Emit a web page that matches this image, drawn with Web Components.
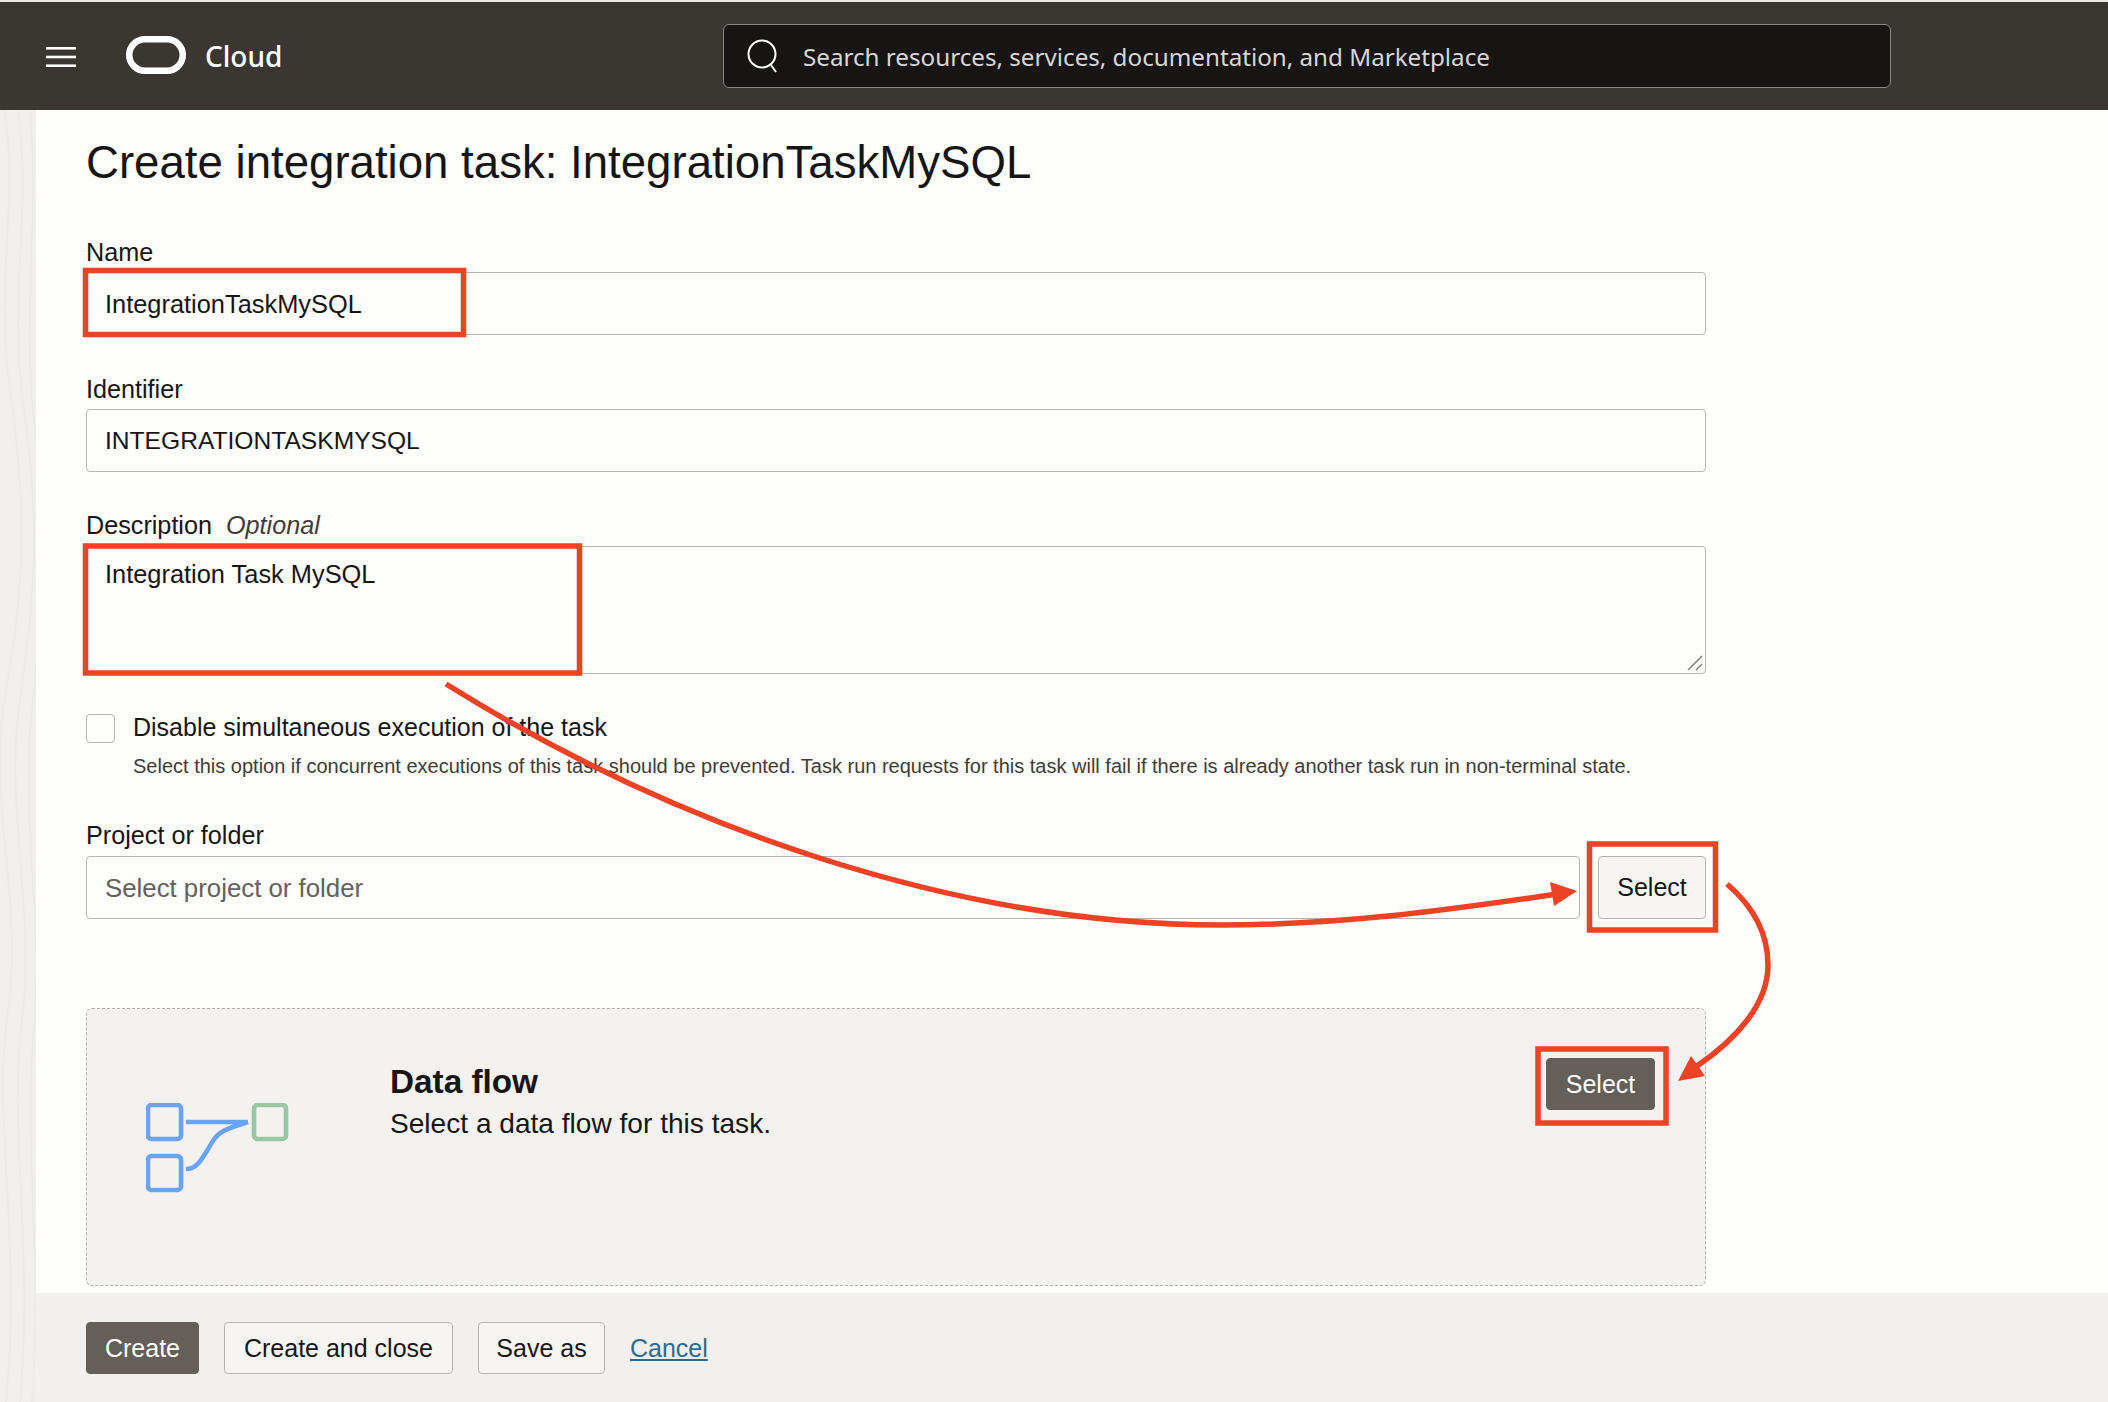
<!DOCTYPE html>
<html>
<head>
<meta charset="utf-8">
<title>Create integration task</title>
<style>
    html, body { margin: 0; padding: 0; }
    body {
        width: 2108px;
        height: 1402px;
        overflow: hidden;
        font-family: "Liberation Sans", Arial, sans-serif;
        color: #161513;
        background: #fdfdfb;
    }
</style>
</head>
<body>
<app-shell>
    <oci-header slot="header"></oci-header>
    <task-form>
        <form-field label="Name" value="IntegrationTaskMySQL" size="25.4"></form-field>
        <form-field label="Identifier" value="INTEGRATIONTASKMYSQL" size="24.6" gap="40"></form-field>
        <form-field label="Description" optional value="Integration Task MySQL" size="25.4" multiline gap="39"></form-field>
        <disable-option></disable-option>
        <project-picker></project-picker>
        <data-flow-card></data-flow-card>
    </task-form>
    <form-footer slot="footer"></form-footer>
    <call-outs slot="overlay"></call-outs>
</app-shell>

<script>
class AppShell extends HTMLElement {
    constructor() {
        super();
        this.attachShadow({ mode: 'open' });
        this.shadowRoot.innerHTML = `
            <style>
                :host {
                    display: flex;
                    flex-direction: column;
                    position: relative;
                    width: 2108px;
                    height: 1402px;
                    background: #f0efed;
                }
                .top-gap { height: 2px; background: #e9e8e5; flex: none; }
                .body { flex: 1; display: flex; min-height: 0; }
                .strip { width: 36px; flex: none; background: #f0efed; overflow: hidden; }
                .strip svg { display: block; }
                .main { flex: 1; display: flex; flex-direction: column; min-width: 0; }
                .content { flex: 1; background: #fdfdfb; min-height: 0; }
            </style>
            <div class="top-gap"></div>
            <slot name="header"></slot>
            <div class="body">
                <div class="strip">
                    <svg width="36" height="1292" viewBox="0 0 36 1292" fill="none" stroke="#ecebe9" stroke-width="2">
                        <path d="M4 0C20 90 -6 170 10 280S26 470 6 580S24 790 8 900S22 1130 6 1292"/>
                        <path d="M18 0C32 100 8 190 24 300S36 480 20 590S36 800 22 910S34 1140 20 1292"/>
                        <path d="M30 0C40 110 22 200 34 310S44 490 32 600S44 810 34 920S42 1150 32 1292"/>
                    </svg>
                </div>
                <div class="main">
                    <div class="content"><slot></slot></div>
                    <slot name="footer"></slot>
                </div>
            </div>
            <slot name="overlay"></slot>
        `;
    }
}

class OciHeader extends HTMLElement {
    constructor() {
        super();
        this.attachShadow({ mode: 'open' });
        this.shadowRoot.innerHTML = `
            <style>
                :host {
                    display: flex;
                    align-items: center;
                    flex: none;
                    height: 108px;
                    background: #3a3733;
                    color: #fff;
                    font-family: "Liberation Sans", Arial, sans-serif;
                }
                .burger { margin: 2px 0 0 46px; width: 30px; height: 20px; display: block; }
                .logo { margin: 0 0 2px 50px; width: 60px; height: 38px; display: block; }
                .brand { margin-left: 19px; width: 423px; font-family: "Noto Sans", sans-serif; font-size: 28px; font-weight: 500; }
                .search {
                    margin-left: 95px;
                    width: 1168px;
                    height: 64px;
                    box-sizing: border-box;
                    background: #161513;
                    border: 1px solid #8b8882;
                    border-radius: 6px;
                    display: flex;
                    align-items: center;
                    padding-left: 23px;
                }
                .search svg { width: 32px; height: 34px; display: block; flex: none; }
                .placeholder { margin-left: 24px; font-family: "Noto Sans", sans-serif; font-size: 24.2px; color: #d9d7d3; }
            </style>
            <svg class="burger" viewBox="0 0 30 20" fill="#fff">
                <rect y="0" width="30" height="2.6"/>
                <rect y="8.7" width="30" height="2.6"/>
                <rect y="17.4" width="30" height="2.6"/>
            </svg>
            <svg class="logo" viewBox="0 0 60 38" fill="none" stroke="#fff" stroke-width="6.5">
                <rect x="3.25" y="3.25" width="53.5" height="31.5" rx="15.7"/>
            </svg>
            <div class="brand">Cloud</div>
            <div class="search">
                <svg viewBox="0 0 32 34" fill="none" stroke="#fff" stroke-width="2">
                    <circle cx="15" cy="15" r="13.5"/>
                    <path d="M24 26l5 7"/>
                </svg>
                <div class="placeholder">Search resources, services, documentation, and Marketplace</div>
            </div>
        `;
    }
}

class TaskForm extends HTMLElement {
    constructor() {
        super();
        this.attachShadow({ mode: 'open' });
        this.shadowRoot.innerHTML = `
            <style>
                :host {
                    display: block;
                    width: 1620px;
                    padding-left: 50px;
                    font-family: "Liberation Sans", Arial, sans-serif;
                    color: #161513;
                }
                h1 {
                    margin: 0;
                    padding-top: 27px;
                    font-size: 45.6px;
                    line-height: 52px;
                    font-weight: 400;
                    height: 52px;
                }
                .fields { display: block; margin-top: 49px; }
            </style>
            <h1>Create integration task: IntegrationTaskMySQL</h1>
            <div class="fields"><slot></slot></div>
        `;
    }
}

class FormField extends HTMLElement {
    constructor() {
        super();
        this.attachShadow({ mode: 'open' });
        const multiline = this.hasAttribute('multiline');
        const optional = this.hasAttribute('optional') ? '<em>Optional</em>' : '';
        const gap = this.getAttribute('gap') || 0;
        this.shadowRoot.innerHTML = `
            <style>
                :host { display: block; margin-top: ${gap}px; }
                .label { font-size: 25.2px; line-height: 28px; height: 28px; margin-bottom: ${multiline ? 7 : 6}px; }
                em { margin-left: 14px; font-style: italic; color: #3f3c38; }
                .box {
                    box-sizing: border-box;
                    position: relative;
                    height: ${multiline ? 128 : 63}px;
                    background: #fdfdfc;
                    border: 1px solid #b7b3ad;
                    border-radius: 4px;
                    padding: ${multiline ? '12px' : '16px'} 18px 0;
                    font-size: ${this.getAttribute('size')}px;
                    line-height: 30px;
                }
                .grip { position: absolute; right: 2px; bottom: 2px; width: 16px; height: 16px; display: block; }
            </style>
            <div class="label">${this.getAttribute('label')}${optional}</div>
            <div class="box">${this.getAttribute('value')}${multiline ? `
                <svg class="grip" viewBox="0 0 16 16" fill="none" stroke="#77736d" stroke-width="1.2">
                    <path d="M1 15L15 1M9 15l6-6"/>
                </svg>` : ''}</div>
        `;
    }
}

class DisableOption extends HTMLElement {
    constructor() {
        super();
        this.attachShadow({ mode: 'open' });
        this.shadowRoot.innerHTML = `
            <style>
                :host { display: grid; grid-template-columns: 29px 1fr; column-gap: 18px; margin-top: 40px; }
                .check { box-sizing: border-box; width: 29px; height: 29px; border: 1px solid #b7b3ad; border-radius: 4px; background: #fdfdfc; }
                .title { font-size: 25px; line-height: 30px; margin-top: -2px; }
                .help { font-size: 20px; line-height: 24px; margin-top: 12px; color: #3f3c38; white-space: nowrap; }
            </style>
            <div class="check"></div>
            <div>
                <div class="title">Disable simultaneous execution of the task</div>
                <div class="help">Select this option if concurrent executions of this task should be prevented. Task run requests for this task will fail if there is already another task run in non-terminal state.</div>
            </div>
        `;
    }
}

class ProjectPicker extends HTMLElement {
    constructor() {
        super();
        this.attachShadow({ mode: 'open' });
        this.shadowRoot.innerHTML = `
            <style>
                :host { display: block; margin-top: 43px; }
                .label { font-size: 25.2px; line-height: 28px; height: 28px; margin-bottom: 7px; }
                .row { display: flex; gap: 18px; }
                .box {
                    flex: 1;
                    box-sizing: border-box;
                    height: 63px;
                    border: 1px solid #b7b3ad;
                    border-radius: 4px;
                    background: #fdfdfc;
                    padding: 16px 18px 0;
                    font-size: 25.8px;
                    line-height: 30px;
                    color: #65615b;
                }
                oj-button { width: 108px; padding: 0; }
            </style>
            <div class="label">Project or folder</div>
            <div class="row">
                <div class="box">Select project or folder</div>
                <oj-button>Select</oj-button>
            </div>
        `;
    }
}

class OjButton extends HTMLElement {
    constructor() {
        super();
        this.attachShadow({ mode: 'open' });
        this.shadowRoot.innerHTML = `
            <style>
                :host {
                    display: inline-flex;
                    align-items: center;
                    justify-content: center;
                    box-sizing: border-box;
                    height: 63px;
                    padding: 0 18px;
                    border: 1px solid #b7b3ad;
                    border-radius: 4px;
                    background: #f6f5f3;
                    color: #161513;
                    font-family: "Liberation Sans", Arial, sans-serif;
                    font-size: 25px;
                }
                :host([primary]) { background: #645f59; border-color: #645f59; color: #fff; }
                :host([small]) { height: 52px; }
            </style>
            <slot></slot>
        `;
    }
}

class DataFlowCard extends HTMLElement {
    constructor() {
        super();
        this.attachShadow({ mode: 'open' });
        this.shadowRoot.innerHTML = `
            <style>
                :host {
                    display: flex;
                    align-items: flex-start;
                    box-sizing: border-box;
                    height: 278px;
                    margin-top: 89px;
                    background: #f3f2f0;
                    border: 1px dashed #b3afa9;
                    border-radius: 6px;
                    padding: 49px 50px 0 59px;
                }
                svg { display: block; width: 146px; height: 96px; margin-top: 45px; flex: none; }
                .text { flex: 1; margin-left: 98px; padding-top: 4px; }
                h2 { margin: 0; font-size: 33.3px; line-height: 40px; font-weight: 700; }
                p { margin: 5px 0 0; font-size: 28.1px; line-height: 34px; }
                oj-button { width: 109px; padding: 0; }
            </style>
            <svg viewBox="0 0 146 96" fill="none" stroke-width="4.6">
                <rect x="2" y="2" width="33" height="34" rx="3.5" stroke="#6aa3fa"/>
                <rect x="2" y="53" width="33" height="34" rx="3.5" stroke="#6aa3fa"/>
                <rect x="108" y="2" width="32" height="34" rx="3.5" stroke="#97c8a2"/>
                <path d="M40 19H102M40 66C54 66 59 49 69 35C76 26 90 23 102 19" stroke="#6aa3fa"/>
            </svg>
            <div class="text">
                <h2>Data flow</h2>
                <p>Select a data flow for this task.</p>
            </div>
            <oj-button primary small>Select</oj-button>
        `;
    }
}

class FormFooter extends HTMLElement {
    constructor() {
        super();
        this.attachShadow({ mode: 'open' });
        this.shadowRoot.innerHTML = `
            <style>
                :host {
                    display: flex;
                    align-items: center;
                    flex: none;
                    box-sizing: border-box;
                    height: 109px;
                    padding: 0 0 0 50px;
                    background: #f1f0ee;
                    gap: 25px;
                }
                oj-button:nth-of-type(1) { width: 113px; padding: 1px 0 0; }
                oj-button:nth-of-type(2) { width: 229px; padding: 1px 0 0; }
                oj-button:nth-of-type(3) { width: 127px; padding: 1px 0 0; }
                a { margin-top: 2px; color: #2b6a93; font-family: "Liberation Sans", Arial, sans-serif; font-size: 25px; text-decoration: underline; }
            </style>
            <oj-button primary small>Create</oj-button>
            <oj-button small>Create and close</oj-button>
            <oj-button small>Save as</oj-button>
            <a href="#">Cancel</a>
        `;
    }
}

// red annotations painted over the screenshot, coordinates are the picture itself
class CallOuts extends HTMLElement {
    constructor() {
        super();
        this.attachShadow({ mode: 'open' });
        this.shadowRoot.innerHTML = `
            <style>
                :host { position: absolute; left: 0; top: 0; width: 2108px; height: 1402px; pointer-events: none; }
                svg { display: block; }
            </style>
            <svg width="2108" height="1402" viewBox="0 0 2108 1402" fill="none" stroke="#ef4123" stroke-width="5.5">
                <rect x="85.5" y="270.5" width="378" height="64"/>
                <rect x="85.5" y="546" width="494" height="127"/>
                <rect x="1589.5" y="844" width="126" height="86"/>
                <rect x="1538" y="1049" width="128" height="74"/>
                <path d="M446 684C680 830 960 925 1221 925C1350 925 1460 908 1558 894"/>
                <path d="M1727 884C1755 908 1768 935 1768 965C1768 1005 1735 1040 1697 1066"/>
                <path fill="#ef4123" stroke="none" d="M1577 891L1550 882L1554 906Z"/>
                <path fill="#ef4123" stroke="none" d="M1678 1081L1691 1056L1705 1076Z"/>
            </svg>
        `;
    }
}

customElements.define('app-shell', AppShell);
customElements.define('oci-header', OciHeader);
customElements.define('task-form', TaskForm);
customElements.define('form-field', FormField);
customElements.define('disable-option', DisableOption);
customElements.define('oj-button', OjButton);
customElements.define('project-picker', ProjectPicker);
customElements.define('data-flow-card', DataFlowCard);
customElements.define('form-footer', FormFooter);
customElements.define('call-outs', CallOuts);
</script>
</body>
</html>
